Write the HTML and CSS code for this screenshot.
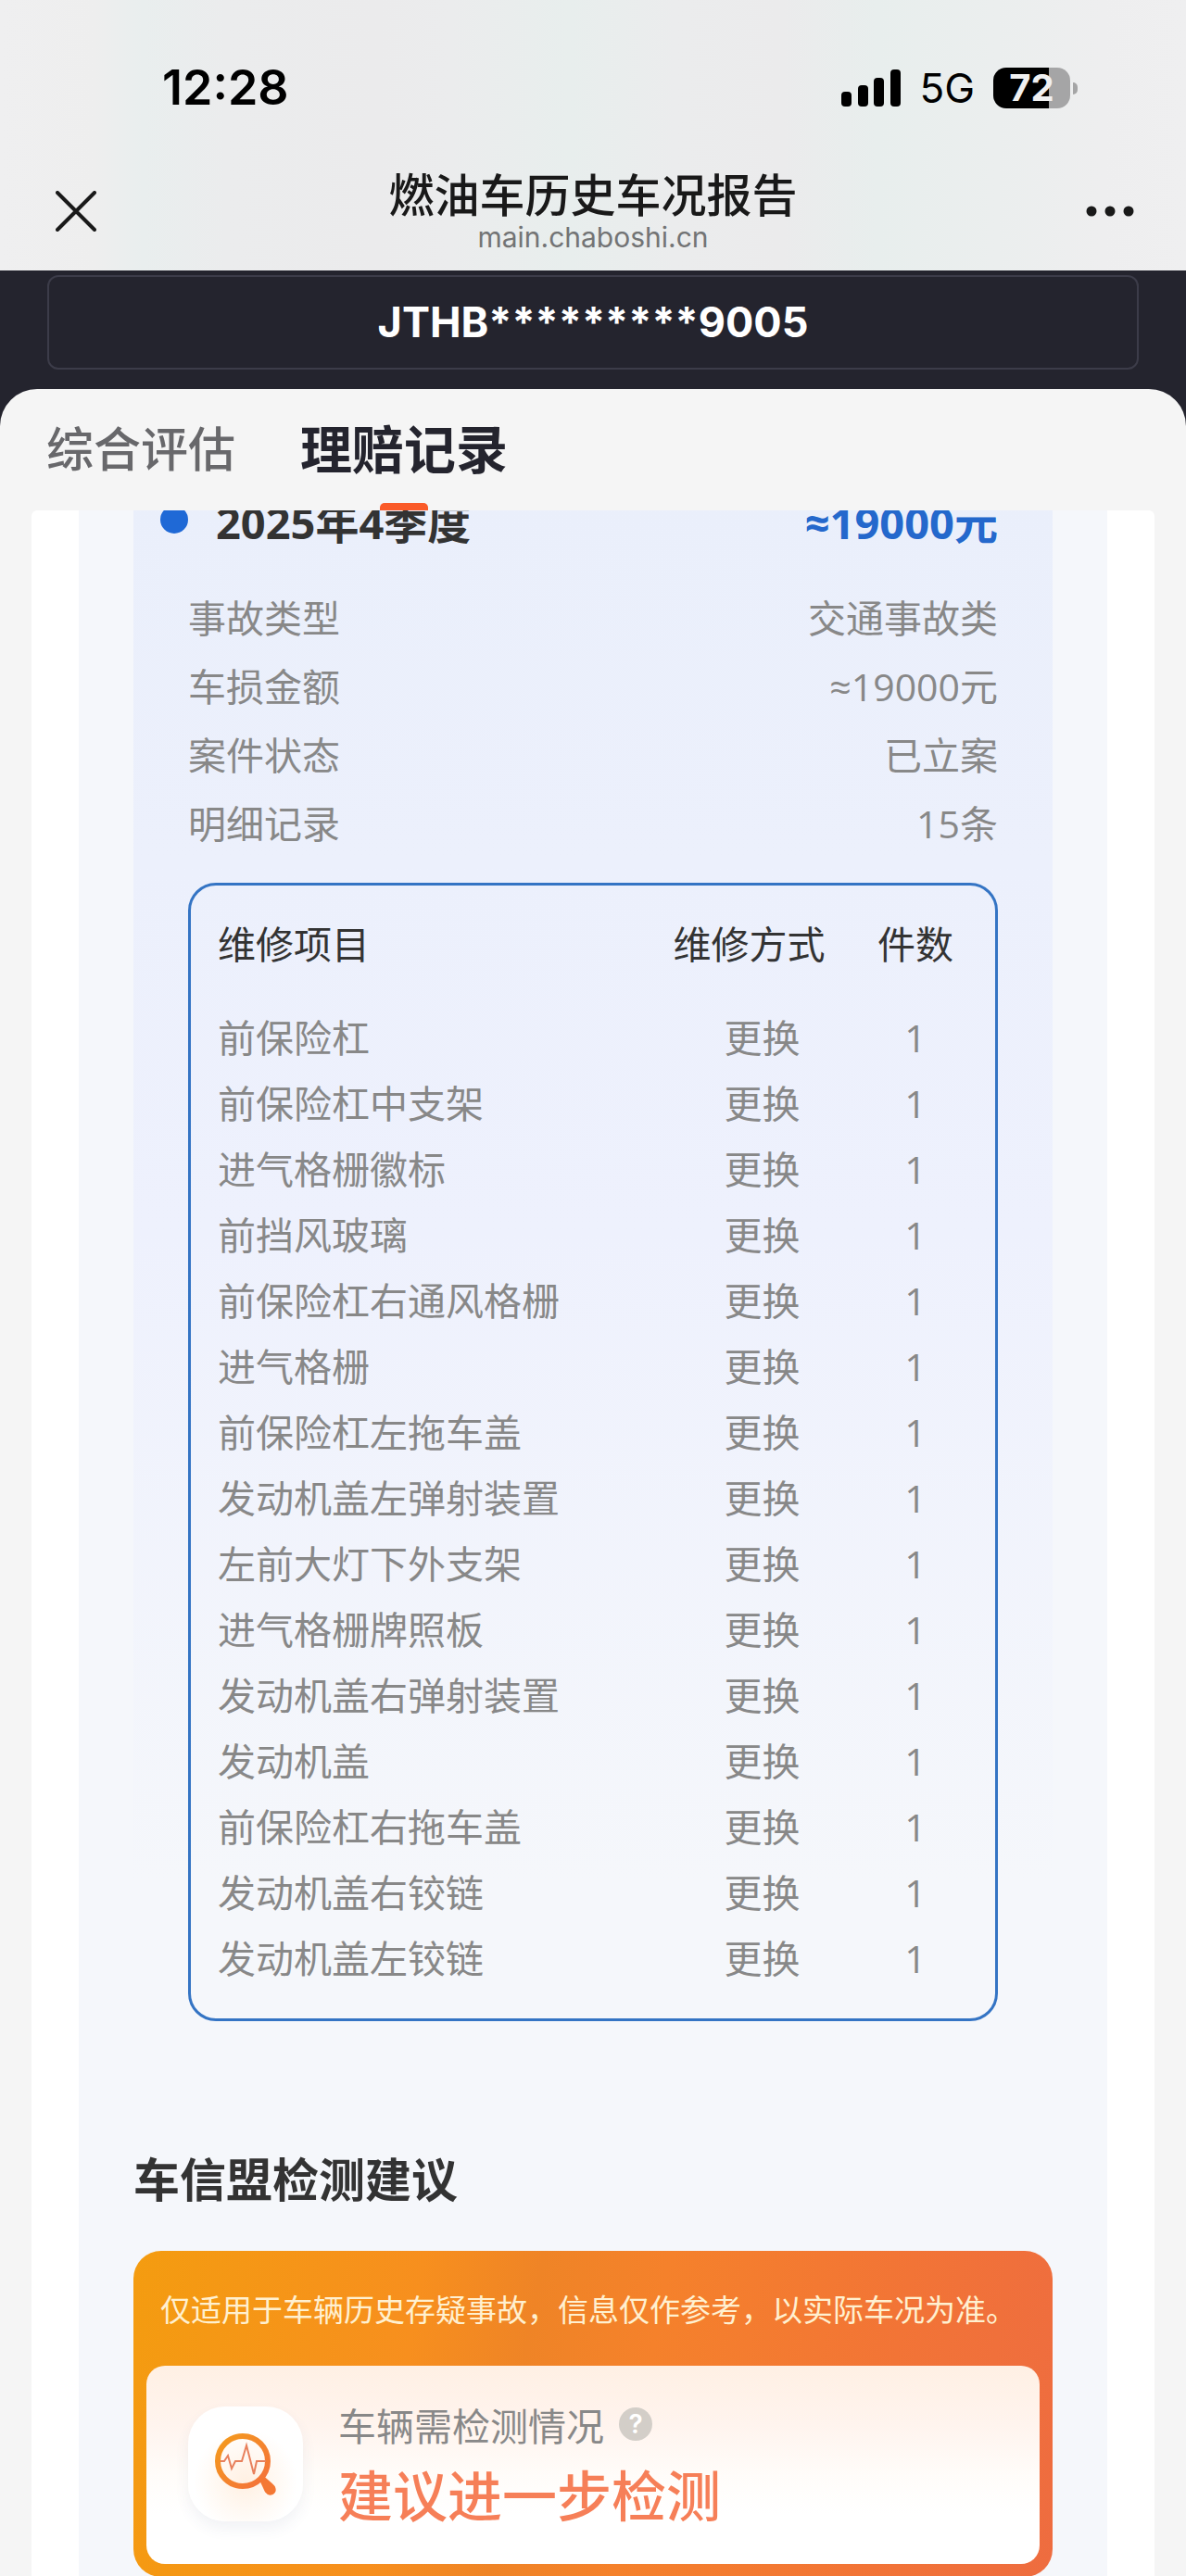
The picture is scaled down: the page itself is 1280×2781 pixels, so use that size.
FILE: index.html
```html
<!DOCTYPE html>
<html lang="zh-CN">
<head>
    <meta charset="UTF-8">
    <meta name="viewport" content="width=device-width, initial-scale=1.0">
    <title>燃油车历史车况报告</title>
    <link rel="stylesheet" href="styles.css">
</head>
<body>

    <header class="topbar">
        <div class="status">
            <span class="time">12:28</span>
            <div class="status-icons">
                <svg class="signal" width="64" height="40" viewBox="0 0 64 40">
                    <rect x="0" y="24" width="11" height="16" rx="4"/>
                    <rect x="18" y="17" width="11" height="23" rx="4"/>
                    <rect x="35" y="9" width="11" height="31" rx="4"/>
                    <rect x="53" y="0" width="11" height="40" rx="4"/>
                </svg>
                <span class="network">5G</span>
                <div class="battery"><span class="battery-level">72</span></div>
            </div>
        </div>
        <div class="nav">
            <button class="nav-btn" type="button" aria-label="关闭">
                <svg width="44" height="44" viewBox="0 0 44 44">
                    <path d="M2 2L42 42M42 2L2 42" stroke="#191919" stroke-width="4" stroke-linecap="round"/>
                </svg>
            </button>
            <div class="nav-title">
                <h1>燃油车历史车况报告</h1>
                <p>main.chaboshi.cn</p>
            </div>
            <button class="nav-btn nav-more" type="button" aria-label="更多">
                <svg width="52" height="12" viewBox="0 0 52 12" fill="#191919">
                    <circle cx="6" cy="6" r="5.5"/>
                    <circle cx="26" cy="6" r="5.5"/>
                    <circle cx="46" cy="6" r="5.5"/>
                </svg>
            </button>
        </div>
    </header>

    <div class="vin-bar">
        <div class="vin">JTHB*********9005</div>
    </div>

    <div class="sheet-wrap">
        <nav class="tabs">
            <a href="#summary">综合评估</a>
            <a class="active" href="#claims">理赔记录</a>
        </nav>
    </div>

    <main class="scroller" id="claims">
        <div class="paper">
            <section class="claim">
                <div class="claim-head">
                    <i class="dot"></i>
                    <h2>2025年4季度</h2>
                    <strong>≈19000元</strong>
                </div>
                <dl class="info">
                    <div><dt>事故类型</dt><dd>交通事故类</dd></div>
                    <div><dt>车损金额</dt><dd>≈19000元</dd></div>
                    <div><dt>案件状态</dt><dd>已立案</dd></div>
                    <div><dt>明细记录</dt><dd>15条</dd></div>
                </dl>
                <div class="parts">
                    <table>
                        <thead>
                            <tr><th class="name">维修项目</th><th class="way">维修方式</th><th class="count">件数</th></tr>
                        </thead>
                        <tbody>
                            <tr><td>前保险杠</td><td>更换</td><td>1</td></tr>
                            <tr><td>前保险杠中支架</td><td>更换</td><td>1</td></tr>
                            <tr><td>进气格栅徽标</td><td>更换</td><td>1</td></tr>
                            <tr><td>前挡风玻璃</td><td>更换</td><td>1</td></tr>
                            <tr><td>前保险杠右通风格栅</td><td>更换</td><td>1</td></tr>
                            <tr><td>进气格栅</td><td>更换</td><td>1</td></tr>
                            <tr><td>前保险杠左拖车盖</td><td>更换</td><td>1</td></tr>
                            <tr><td>发动机盖左弹射装置</td><td>更换</td><td>1</td></tr>
                            <tr><td>左前大灯下外支架</td><td>更换</td><td>1</td></tr>
                            <tr><td>进气格栅牌照板</td><td>更换</td><td>1</td></tr>
                            <tr><td>发动机盖右弹射装置</td><td>更换</td><td>1</td></tr>
                            <tr><td>发动机盖</td><td>更换</td><td>1</td></tr>
                            <tr><td>前保险杠右拖车盖</td><td>更换</td><td>1</td></tr>
                            <tr><td>发动机盖右铰链</td><td>更换</td><td>1</td></tr>
                            <tr><td>发动机盖左铰链</td><td>更换</td><td>1</td></tr>
                        </tbody>
                    </table>
                </div>
            </section>

            <section class="advice">
                <h2>车信盟检测建议</h2>
                <div class="advice-card">
                    <p class="notice">仅适用于车辆历史存疑事故，信息仅作参考，以实际车况为准。</p>
                    <div class="result">
                        <div class="result-icon">
                            <svg width="68" height="68" viewBox="0 0 68 68" fill="none">
                                <defs>
                                    <linearGradient id="lens" x1="0" y1="0" x2="1" y2="1">
                                        <stop offset="0" stop-color="#f49c1c"/>
                                        <stop offset="1" stop-color="#f4703c"/>
                                    </linearGradient>
                                </defs>
                                <circle cx="31" cy="31" r="27" stroke="url(#lens)" stroke-width="6"/>
                                <path d="M50 51L53 48Q64 57 65 59Q67 64 63 66Q59 68 56 64Z" fill="#f47834" stroke="#f47834" stroke-width="2" stroke-linejoin="round"/>
                                <path d="M7 31H11L15 25L19 39L23 31H30L35 14L43 45L46 31H56" stroke="#e8805c" stroke-width="2"/>
                            </svg>
                        </div>
                        <div class="result-text">
                            <p class="label">车辆需检测情况 <button class="help" type="button" aria-label="说明">?</button></p>
                            <p class="verdict">建议进一步检测</p>
                        </div>
                    </div>
                </div>
            </section>
        </div>
    </main>

</body>
</html>
```
FILE: styles.css
```css
* {
    box-sizing: border-box;
}

body {
    margin: 0;
    font-family: "Noto Sans CJK SC", sans-serif;
    background-color: #f5f5f5;
}

h1, h2, p, dl, dd {
    margin: 0;
}

button {
    padding: 0;
    border: 0;
    background: none;
}

/* top bar */
.topbar {
    height: 292px;
    background: linear-gradient(90deg, #efeff0 0%, #eeeeee 8%, #e9eeee 12%, #ebeced 19%, #ebebec 32%, #ebeced 38%, #e8eeed 48%, #ebeced 57%, #ebebec 66%, #e8eeed 74%, #ebeeee 84%, #eeeeef 93%, #efeff0 100%);
}

.status {
    display: flex;
    align-items: center;
    justify-content: space-between;
    padding: 65px 125px 0 175px;
    font-family: Inter, sans-serif;
    line-height: 60px;
}

.time {
    font-size: 52px;
    font-weight: 600;
}

.status-icons {
    display: flex;
    align-items: center;
    gap: 20px;
}

.network {
    font-size: 44px;
}

.battery {
    position: relative;
    width: 83px;
    height: 44px;
    border-radius: 14px;
    background: linear-gradient(90deg, #000 72%, #a5a5a6 72%);
    text-align: center;
}

.battery::after {
    content: "";
    position: absolute;
    top: 16px;
    right: -8px;
    width: 5px;
    height: 13px;
    border-radius: 0 6px 6px 0;
    background: #a5a5a6;
}

.battery-level {
    display: block;
    color: #f0f0f1;
    font-size: 40px;
    font-weight: 700;
    line-height: 44px;
}

.nav {
    display: grid;
    grid-template-columns: 1fr auto 1fr;
    align-items: start;
    padding: 53px 55px 0;
}

.nav-btn {
    display: flex;
    width: 54px;
    height: 100px;
    align-items: center;
    justify-content: center;
}

.nav-more {
    justify-self: end;
}

.nav-title {
    text-align: center;
}

.nav-title h1 {
    color: #191919;
    font-size: 49px;
    font-weight: 500;
    line-height: 60px;
}

.nav-title p {
    color: #737475;
    font-family: Inter, sans-serif;
    font-size: 30px;
    line-height: 36px;
}

/* vin */
.vin-bar {
    padding: 5px 51px 21px;
    background: #24242e;
}

.vin {
    border: 2px solid #3c3c49;
    border-radius: 12px;
    color: #fff;
    font-family: Inter, sans-serif;
    font-size: 45px;
    font-weight: 700;
    line-height: 98px;
    text-align: center;
}

/* tabs */
.sheet-wrap {
    background: #24242e;
}

.tabs {
    display: flex;
    gap: 70px;
    height: 131px;
    padding: 0 50px;
    border-radius: 40px 40px 0 0;
    background: #f5f5f5;
    line-height: 124px;
}

.tabs a {
    position: relative;
    color: #68686b;
    font-size: 51px;
    font-weight: 500;
    text-decoration: none;
}

.tabs .active {
    color: #24242e;
    font-size: 56px;
    font-weight: 700;
}

.tabs .active::after {
    content: "";
    position: absolute;
    bottom: 0;
    left: 50%;
    width: 52px;
    height: 8px;
    margin-left: -26px;
    border-radius: 5px 5px 0 0;
    background: #fa5a28;
}

/* report */
.scroller {
    overflow: hidden;
    margin: 0 34px;
    padding: 0 51px;
    border-radius: 6px 6px 0 0;
    background: #fff;
}

.paper {
    padding: 0 59px;
    background: #f5f7fb;
}

.claim {
    padding: 0 59px;
    background: linear-gradient(#eaeffb, #eef1fd 800px, #f5f7fb 1500px);
    font-family: "Open Sans", "Noto Sans CJK SC", sans-serif;
}

.claim-head {
    display: flex;
    align-items: center;
    margin-top: -19px;
    color: #333;
    font-size: 47px;
    line-height: 64px;
}

.claim-head h2 {
    flex: 1;
    font-size: 47px;
}

.claim-head strong {
    color: #2468cc;
}

.dot {
    width: 30px;
    height: 30px;
    margin: 0 30px 6px -30px;
    border-radius: 50%;
    background: #1f69d6;
}

.info {
    padding-top: 34px;
    color: #888;
    font-size: 41px;
    line-height: 74px;
}

.info div {
    display: flex;
    justify-content: space-between;
}

.parts {
    margin-top: 27px;
    padding: 16px 28px 29px 29px;
    border: 3px solid #3474c4;
    border-radius: 30px;
}

table {
    width: 100%;
    border-collapse: collapse;
    table-layout: fixed;
    color: #888;
    font-size: 41px;
    line-height: 71px;
    text-align: center;
}

th {
    height: 113px;
    padding: 0 0 18px;
    color: #333;
    font-weight: 400;
    vertical-align: middle;
}

td {
    padding: 0;
}

.name,
td:first-child {
    text-align: left;
}

.way {
    width: 215px;
    padding-right: 28px;
}

.count {
    width: 116px;
}

.advice {
    padding-top: 133px;
}

.advice h2 {
    color: #333;
    font-size: 50px;
    line-height: 70px;
}

.advice-card {
    margin-top: 45px;
    padding: 0 14px 14px;
    border-radius: 30px;
    background: linear-gradient(100deg, #f49c10, #f78f1e 30%, #ef8426 42%, #f5812b 55%, #f27436 80%, #ee6c40);
}

.notice {
    padding: 30px 15px;
    color: #fff0d0;
    font-size: 33px;
    line-height: 64px;
    white-space: nowrap;
}

.result {
    display: flex;
    gap: 38px;
    padding: 31px 45px 33px;
    border-radius: 20px;
    background: linear-gradient(#fff0e4, #fff4ee 30%, #fffcf9 55%, #fff 75%);
}

.result-icon {
    display: flex;
    flex: none;
    align-items: center;
    justify-content: center;
    width: 124px;
    height: 124px;
    margin-top: 13px;
    border-radius: 40px;
    background: radial-gradient(circle at 50% 65%, #fff0e2, #fff 55%);
    box-shadow: 0 8px 16px rgba(60, 70, 110, 0.07);
}

.label {
    display: flex;
    align-items: center;
    gap: 16px;
    color: #888;
    font-size: 41px;
    line-height: 64px;
}

.help {
    width: 36px;
    height: 36px;
    border-radius: 50%;
    background: #d3cec8;
    color: #fff;
    font-family: Inter, sans-serif;
    font-size: 28px;
    font-weight: 600;
    line-height: 36px;
}

.verdict {
    color: #f67f58;
    font-size: 59px;
    font-weight: 500;
    line-height: 86px;
}
```
